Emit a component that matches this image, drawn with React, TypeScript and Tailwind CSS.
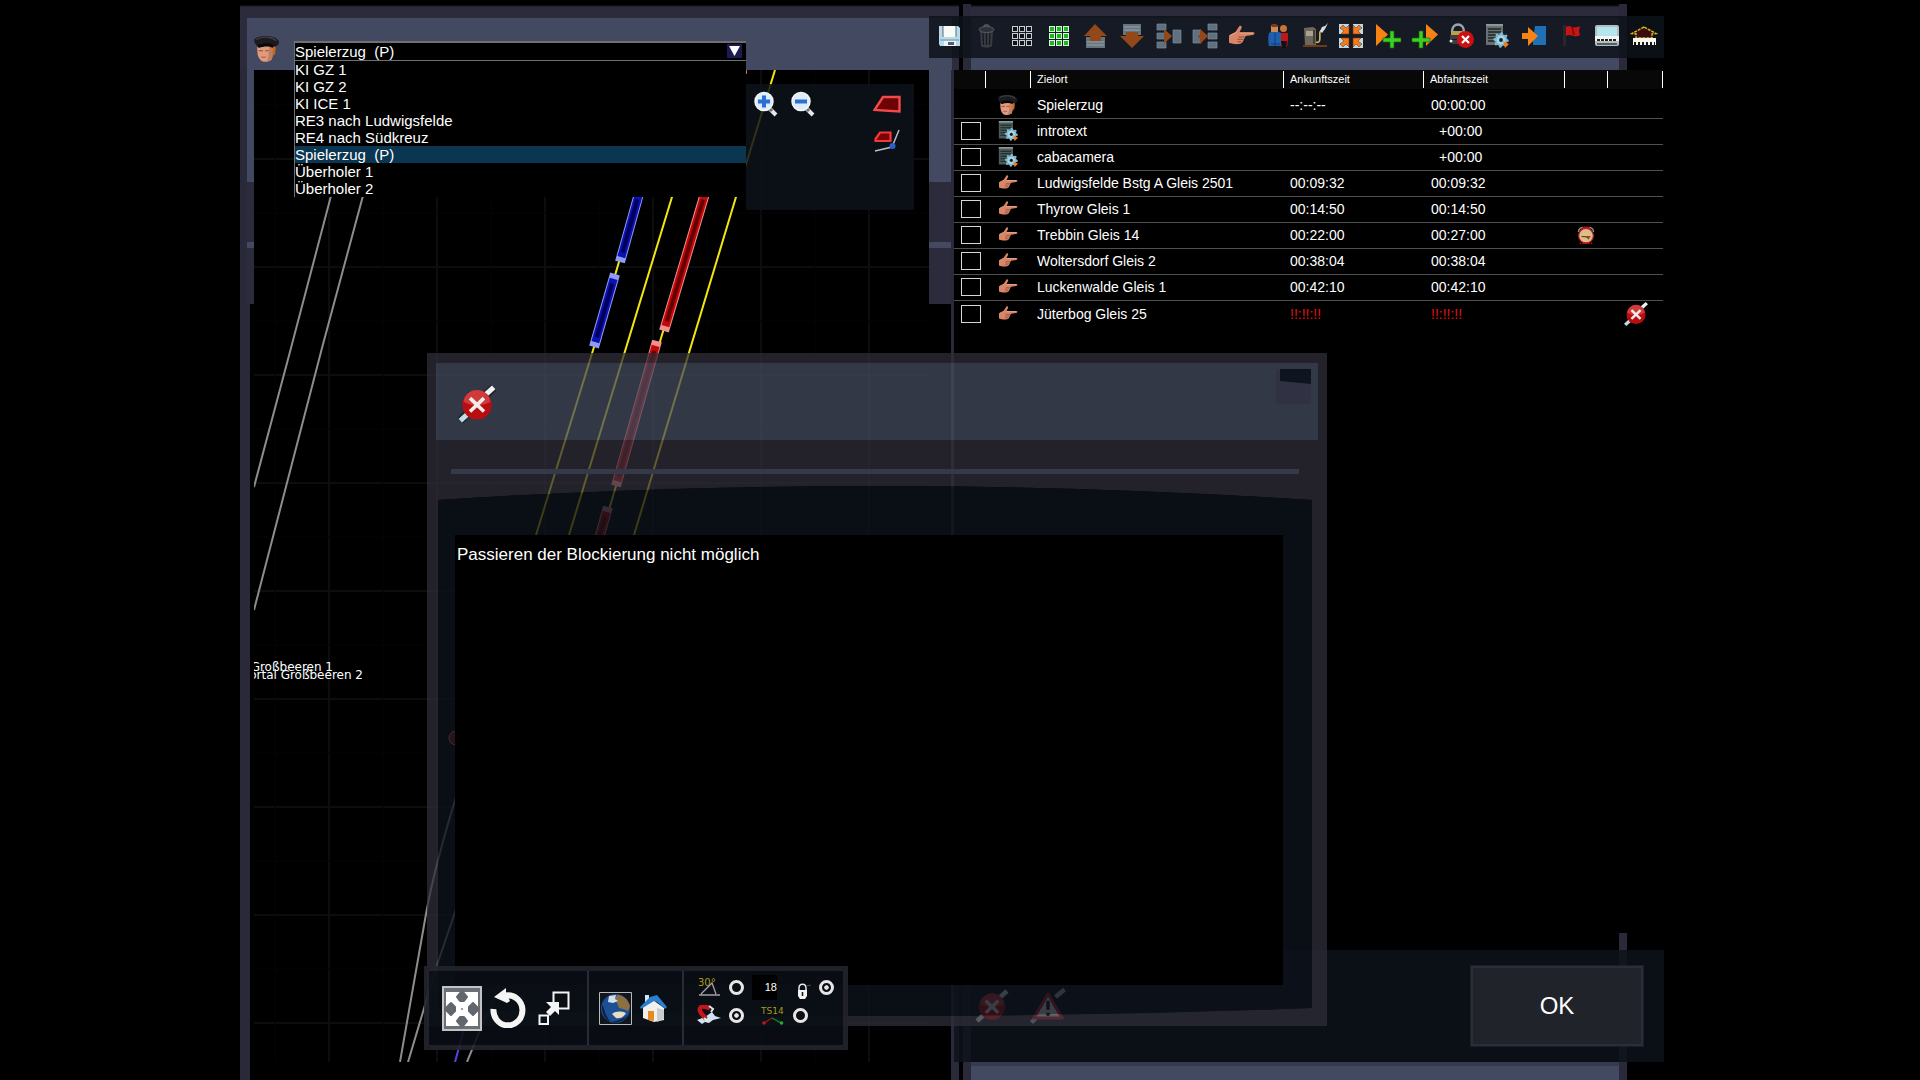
import type { ReactNode } from 'react'

const trains = [
  'KI GZ 1',
  'KI GZ 2',
  'KI ICE 1',
  'RE3 nach Ludwigsfelde',
  'RE4 nach Südkreuz',
  'Spielerzug\u00a0\u00a0(P)',
  'Überholer 1',
  'Überholer 2',
]
const selectedTrain = 'Spielerzug\u00a0\u00a0(P)'

type Stop = {
  kind: 'driver' | 'script' | 'stop'
  name: string
  arrival: string
  departure: string
  timed?: boolean
  blocked?: boolean
}

const stops: Stop[] = [
  { kind: 'driver', name: 'Spielerzug', arrival: '--:--:--', departure: '00:00:00' },
  { kind: 'script', name: 'introtext', arrival: '', departure: '+00:00' },
  { kind: 'script', name: 'cabacamera', arrival: '', departure: '+00:00' },
  { kind: 'stop', name: 'Ludwigsfelde Bstg A Gleis 2501', arrival: '00:09:32', departure: '00:09:32' },
  { kind: 'stop', name: 'Thyrow Gleis 1', arrival: '00:14:50', departure: '00:14:50' },
  { kind: 'stop', name: 'Trebbin Gleis 14', arrival: '00:22:00', departure: '00:27:00', timed: true },
  { kind: 'stop', name: 'Woltersdorf Gleis 2', arrival: '00:38:04', departure: '00:38:04' },
  { kind: 'stop', name: 'Luckenwalde Gleis 1', arrival: '00:42:10', departure: '00:42:10' },
  { kind: 'stop', name: 'Jüterbog Gleis 25', arrival: '!!:!!:!!', departure: '!!:!!:!!', blocked: true },
]

function Svg({ children, className = 'size-6' }: { children: ReactNode; className?: string }) {
  return (
    <svg viewBox="0 0 24 24" className={`shrink-0 overflow-visible ${className}`} fill="none" aria-hidden="true">
      {children}
    </svg>
  )
}

function DriverIcon({ className }: { className?: string }) {
  return (
    <Svg className={className}>
      <path d="M4 9c-1 3 0 5 0 8 1 3 2 5 5 6 3 0 5 0 7-2 1-3 2-7 2-12z" fill="#e09a7c" />
      <path d="M14 10c1 3 1 6 2 9l3-3c0-2 1-4 0-7z" fill="#c4661c" />
      <path d="M14 11c-1 4 0 8-2 11 2 0 3 0 4-1 1-4 1-7 1-10z" fill="#c27d61" />
      <path d="M5 13.500h3.500M10.500 13.500h3" stroke="#8a4b36" strokeWidth="1" />
      <path d="M7 19h4" stroke="#b0604a" strokeWidth="1" />
      <path d="M1 4c2-4 18-5 21 1 1 3-1 4-3 5-4-1-10-2-14 1-2-2-4-4-4-7z" fill="#1b1b1f" />
      <path d="M3 4c4-3 13-3 17 1" stroke="#3f3f46" strokeWidth="1.200" />
      <path d="M4 9c4-2 10-3 14 0l-1 2c-4-2-8-1-12 0z" fill="#08080a" />
    </Svg>
  )
}

function gearPath(cx: number, cy: number, r: number) {
  const pts: string[] = []
  for (let i = 0; i < 32; i++) {
    const a = (i / 32) * Math.PI * 2
    const rr = i % 4 < 2 ? r : r - 1.7
    pts.push(`${(cx + Math.cos(a) * rr).toFixed(1)},${(cy + Math.sin(a) * rr).toFixed(1)}`)
  }
  return pts.join(' ')
}

function ScriptIcon({ className, paper = '#4b5a5a' }: { className?: string; paper?: string }) {
  return (
    <Svg className={className}>
      <rect x="1" y="0" width="17" height="21" fill={paper} />
      <path d="M1 0h17v2H1z" fill="#8b9a98" />
      <path d="M3 5h13M3 8h13M3 11h13M3 14h13M3 17h13" stroke="#1c2424" strokeWidth="1.300" />
      <polygon points={gearPath(16, 16, 7.8)} fill="#7fb9cf" />
      <circle cx="16" cy="16" r="4.400" fill="#a5d5e6" />
      <circle cx="16" cy="16" r="1.900" fill="#12202a" />
      <path d="M18 17l6 3-4 4z" fill="#f27d1c" />
    </Svg>
  )
}

function HandIcon({ className }: { className?: string }) {
  return (
    <Svg className={className}>
      <path
        d="M0 11c2-1 4-2 6-3l4-6c1-1 3 0 2 2l-2 4 13 0c2 0 2 2 0 2.500l-7 1-1 2-1 2-1 2-2 1.500c-4 1-8 0-11-1z"
        fill="#d98668"
      />
      <path d="M10 8.700h13M1 11c2-1 4-2 6-3" stroke="#f0ae92" strokeWidth="0.800" />
      <path d="M9 12.500h6M8 14.700h6M8 17h4" stroke="#8f4a35" strokeWidth="0.900" />
    </Svg>
  )
}

function BlockIcon({ className }: { className?: string }) {
  return (
    <Svg className={className}>
      <path d="M2 22L22 2" stroke="#15181f" strokeOpacity=".6" strokeWidth="5" />
      <path d="M2 22L7 17.500" stroke="#c5dbe4" strokeWidth="3" />
      <path d="M17 6.500L22 2" stroke="#eef2f2" strokeWidth="3" />
      <circle cx="12" cy="12.500" r="8.800" fill="#b90d12" />
      <path d="M3.900 10.500a8.200 8.200 0 0 1 16.200 0c-4 3-12 3-16.200 0z" fill="#cf3a3a" />
      <path d="M7.800 8.500l8.400 8M16.200 8.500l-8.400 8" stroke="#f4ece8" strokeWidth="2.200" />
    </Svg>
  )
}

function WarningIcon({ className }: { className?: string }) {
  return (
    <Svg className={className}>
      <path d="M1 23L6 18M17 6L23 1" stroke="#b4bcc4" strokeWidth="3" />
      <path d="M12 4L2.500 20h19z" fill="#e8e8e8" stroke="#c02020" strokeWidth="2" strokeLinejoin="round" />
      <path d="M12 8.500v6M12 16.500v2.200" stroke="#101010" strokeWidth="2.200" />
    </Svg>
  )
}

function ClockIcon({ className }: { className?: string }) {
  return (
    <Svg className={className}>
      <path d="M2 8c0-4 3-6 6-6M22 8c0-4-3-6-6-6" stroke="#8d8d8d" strokeWidth="2" />
      <path d="M7 2c3-2 7-2 10 0l3 4H4z" fill="#b3121c" />
      <circle cx="12" cy="13" r="9.800" fill="#e0bd84" stroke="#b3202a" strokeWidth="1.500" />
      <path d="M6 14l7 .5 3 3M13 14.500h5" stroke="#5a3424" strokeWidth="1.500" />
      <path d="M5 22l-1 2M19 22l1 2M7 23h10" stroke="#b3121c" strokeWidth="2" />
    </Svg>
  )
}

function DotGrid({ stroke, fill }: { stroke: string; fill: string }) {
  return (
    <Svg>
      {[3, 10, 17].map((y) =>
        [3, 10, 17].map((x) => (
          <rect key={`${x}-${y}`} x={x - 0.5} y={y - 0.5} width="5" height="5" fill={fill} stroke={stroke} />
        )),
      )}
    </Svg>
  )
}

const plus = 'h4v7h7v4h-7v6h-4v-6h-7v-4h7z'

const tools: { label: string; icon: ReactNode }[] = [
  {
    label: 'Speichern',
    icon: (
      <Svg>
        <path d="M2 2h19l2 2v18H3l-1-2z" fill="#b9d9ea" />
        <path d="M6 2h13v11H6z" fill="#f7faf5" />
        <path d="M3 15h19v2H3z" fill="#8fb6cd" />
        <path d="M7 17h12v5H7z" fill="#eef4f4" />
        <path d="M11 18h6v3h-6z" fill="#555e66" />
        <path d="M6 2v11M19 2v11" stroke="#3d4a54" strokeWidth=".8" />
      </Svg>
    ),
  },
  {
    label: 'Löschen',
    icon: (
      <Svg>
        <path d="M6 6h13l-1 16c-3 2-8 2-11 0z" fill="#393c43" />
        <path d="M9 9l.5 12M12.500 9v12M16 9l-.5 12" stroke="#15181e" strokeWidth="1.300" />
        <ellipse cx="12.500" cy="5.500" rx="7.500" ry="3" fill="#2d3036" stroke="#565a61" />
        <path d="M9.500 3c1-3 5-3 6 0" stroke="#565a61" strokeWidth="1.500" />
      </Svg>
    ),
  },
  { label: 'Raster', icon: <DotGrid stroke="#c9cdd0" fill="#11151b" /> },
  { label: 'Raster aktiv', icon: <DotGrid stroke="#d8f5d8" fill="#17b91d" /> },
  {
    label: 'Nach oben',
    icon: (
      <Svg>
        <path d="M3 13h19v11H3z" fill="#66737e" />
        <path d="M4 18h17M4 21h17" stroke="#99a5ac" />
        <path d="M12 0L24 12h-6v5H7v-5H1z" fill="#93481a" />
      </Svg>
    ),
  },
  {
    label: 'Nach unten',
    icon: (
      <Svg>
        <path d="M3 0h18v11H3z" fill="#66737e" />
        <path d="M4 3h16M4 6h16" stroke="#99a5ac" />
        <path d="M12 24L0 12h6V8h12v4h6z" fill="#93481a" />
      </Svg>
    ),
  },
  {
    label: 'Trennen',
    icon: (
      <Svg>
        <path d="M0 0h9v6H0zM0 9h9v6H0zM0 18h9v6H0zM16 6h8v13h-8z" fill="#5f7180" stroke="#7b8c98" strokeWidth=".7" />
        <path d="M7 11V5l8 7-8 8v-6z" fill="#93481a" />
      </Svg>
    ),
  },
  {
    label: 'Verbinden',
    icon: (
      <Svg>
        <path d="M15 0h9v6h-9zM15 9h9v6h-9zM15 18h9v6h-9zM0 6h8v13H0z" fill="#5f7180" stroke="#7b8c98" strokeWidth=".7" />
        <path d="M5 14v-3h2V5l8 7-8 8v-6z" fill="#93481a" />
      </Svg>
    ),
  },
  {
    label: 'Ziel',
    icon: <HandIcon className="size-[25px]" />,
  },
  {
    label: 'Fahrgäste',
    icon: (
      <Svg>
        <path d="M14 9h8v7l-1 7h-6z" fill="#c01519" />
        <path d="M15 17h6l-1 7h-4z" fill="#111" />
        <circle cx="17.500" cy="4.500" r="3.500" fill="#c4763c" />
        <path d="M3 9c3-2 9-2 12 0v13H3c-1-4-1-9 0-13z" fill="#1f5fae" />
        <path d="M9 9v13M5 20h9" stroke="#123d78" />
        <path d="M5 2c2-3 7-2 7 1v5H5z" fill="#c98a5a" />
        <path d="M5 1c2-2 6-1 7 1l-1 1H6z" fill="#7a3b12" />
      </Svg>
    ),
  },
  {
    label: 'Tanken',
    icon: (
      <Svg>
        <path d="M1 4l9-1 3 2v16H2z" fill="#6e675d" />
        <path d="M3 7h7v5H3z" fill="#aaa28f" />
        <path d="M11 6v14" stroke="#35302a" strokeWidth="1.500" />
        <path d="M0 21h24v2H0z" fill="#6c3a15" />
        <path d="M13 18c6 2 3-7 4-10l3-3" stroke="#c9b15b" strokeWidth="1.700" />
        <path d="M17 7l2-4 3-1 3-3-3 6-3 4z" fill="#d9dde0" />
      </Svg>
    ),
  },
  {
    label: 'Kuppeln',
    icon: (
      <Svg>
        <path d="M0 0h10v10H0zM14 0h10v10H14zM0 14h10v10H0zM14 14h10v10H14z" fill="#b9dbe6" />
        <path
          d="M1 4l3-3 3 3 3-3v9H2l3-3zM23 4l-3-3-3 3-3-3v9h8l-3-3zM1 20l3 3 3-3 3 3v-9H2l3 3zM23 20l-3 3-3-3-3 3v-9h8l-3 3z"
          fill="#f07b22"
          stroke="#83380b"
          strokeWidth=".6"
        />
      </Svg>
    ),
  },
  {
    label: 'Davor einfügen',
    icon: (
      <Svg>
        <path d="M0 0l12 10.500L0 22z" fill="#f98215" />
        <path d={`M14 7${plus}`} fill="#3ccf22" stroke="#13690b" strokeWidth=".7" />
      </Svg>
    ),
  },
  {
    label: 'Danach einfügen',
    icon: (
      <Svg>
        <path d="M14 0l12 10.500L14 22z" fill="#f98215" />
        <path d={`M7 7${plus}`} fill="#3ccf22" stroke="#13690b" strokeWidth=".7" />
      </Svg>
    ),
  },
  {
    label: 'Sperre aufheben',
    icon: (
      <Svg>
        <path d="M3 8c0-10 12-10 12 0" stroke="#9aa6ad" strokeWidth="2.500" />
        <path d="M2 7h14v4H2z" fill="#b9a04c" />
        <path d="M1 11h12v4H1zM3 16h8v4H3z" fill="#3b3d40" />
        <circle cx="2" cy="17" r="1.500" fill="#e9eef0" />
        <circle cx="16.500" cy="15.500" r="8.500" fill="#cb1014" />
        <path d="M13 12l7 7M20 12l-7 7" stroke="#fff" strokeWidth="2.200" />
      </Svg>
    ),
  },
  { label: 'Skript', icon: <ScriptIcon className="size-6" paper="#6a7070" /> },
  {
    label: 'Portal',
    icon: (
      <Svg>
        <path d="M13 2h11v19H11v-4z" fill="#1f70b4" />
        <path d="M0 9h6V3l10 9-10 10v-7H0z" fill="#f98215" />
      </Svg>
    ),
  },
  {
    label: 'Flagge',
    icon: (
      <Svg>
        <path d="M4 1h3v21H4z" fill="#2e2426" />
        <path d="M7 3c4-3 6 3 14-1l-1 5 1 4c-6 4-9-2-14 1z" fill="#c81414" />
        <path d="M13 3l2 8" stroke="#7d0909" strokeWidth="1.500" />
      </Svg>
    ),
  },
  {
    label: 'Anzeige',
    icon: (
      <Svg>
        <rect x="0" y="1" width="24" height="21" rx="2" fill="#b7bcbc" />
        <path d="M2 3h20v9H2z" fill="#b4e6f0" />
        <path d="M0 12h24v5H0z" fill="#f3f5f4" />
        <path d="M2 16h20" stroke="#222" strokeWidth="2" strokeDasharray="3 1" />
        <path d="M2 19h20v2H2z" fill="#4c6266" />
      </Svg>
    ),
  },
  {
    label: 'Bahnhof',
    icon: (
      <Svg>
        <path d="M12 3L0 9.500l4 .5v4h16v-4l4-.5z" fill="#3a0d10" stroke="#d9b321" strokeWidth="1.500" strokeDasharray="3 1" />
        <path d="M1 14h23v7H1z" fill="#f5f5ee" />
        <path d="M2 19.500h21" stroke="#151515" strokeWidth="3" strokeDasharray="2 2" />
      </Svg>
    ),
  },
]

function Consist({ x1, y1, x2, y2, tone }: { x1: number; y1: number; x2: number; y2: number; tone: 'red' | 'blue' }) {
  const c = tone === 'red' ? ['#f09090', '#c40808', '#660000'] : ['#8f9cf5', '#0a12b4', '#00005c']
  // ends of the inner body are pulled in so that the couplers stay light
  const len = Math.hypot(x2 - x1, y2 - y1)
  const dx = ((x2 - x1) / len) * 5
  const dy = ((y2 - y1) / len) * 5
  return (
    <g>
      <path d={`M${x1} ${y1}L${x2} ${y2}`} stroke={c[0]} strokeWidth="10" />
      <path d={`M${x1 + dx} ${y1 + dy}L${x2 - dx} ${y2 - dy}`} stroke={c[1]} strokeWidth="8" />
      <path d={`M${x1 + dx * 2} ${y1 + dy * 2}L${x2 - dx * 2} ${y2 - dy * 2}`} stroke={c[2]} strokeWidth="4" />
    </g>
  )
}

function TrackMap() {
  const xs = [329, 437, 545, 653, 761, 869]
  const ys = [159, 267, 375, 483, 591, 699, 807, 915, 1023]
  return (
    <svg viewBox="254 70 675 992" preserveAspectRatio="xMinYMin slice" className="absolute inset-0 size-full" fill="none">
      <g stroke="#0d0d0d" strokeWidth="2">
        {xs.map((x) => (
          <path key={x} d={`M${x} 70V1062`} />
        ))}
        {ys.map((y) => (
          <path key={y} d={`M254 ${y}H929`} />
        ))}
      </g>
      <g stroke="#050505">
        {xs.map((x) => (
          <path key={x} d={`M${x - 54} 70V1062`} />
        ))}
        {ys.map((y) => (
          <path key={y} d={`M254 ${y - 54}H929`} />
        ))}
      </g>
      <g stroke="#8d8d8d" strokeWidth="2">
        <path d="M332 192L291 348 254 487" />
        <path d="M364 192L322 348 254 610" />
        <path d="M460 784C445 832 432 880 426 914S408 1016 400 1062" />
        <path d="M470 868L437 965 408 1062" />
        <path d="M500 984L480 1030 467 1062" />
      </g>
      <path d="M472 1000L455 1062" stroke="#5347e0" strokeWidth="2" />
      <g stroke="#f5e50f" strokeWidth="2">
        <path d="M638 197L594 347 536 535" />
        <path d="M704 197L616 486 600 540" />
        <path d="M711 70L672 197 569 535" />
        <path d="M775 70L736 197 634 535" />
      </g>
      <path d="M746 70v4" stroke="#d06a6a" strokeWidth="2" />
      <Consist x1={640} y1={190} x2={620} y2={262} tone="blue" />
      <Consist x1={615} y1={274} x2={594} y2={347} tone="blue" />
      <Consist x1={706} y1={190} x2={664} y2={331} tone="red" />
      <Consist x1={657} y1={341} x2={616} y2={486} tone="red" />
      <Consist x1={608} y1={507} x2={590} y2={570} tone="red" />
      <circle cx="456" cy="738" r="7" fill="#9a1515" stroke="#d0b0b0" />
      <g fill="#fff" fontFamily="'DejaVu Sans', sans-serif" fontSize="12" textAnchor="end">
        <text x="333" y="671">
          Großbeeren 1
        </text>
        <text x="363" y="679">
          Portal Großbeeren 2
        </text>
      </g>
    </svg>
  )
}

function Magnifier({ minus }: { minus?: boolean }) {
  return (
    <Svg>
      <path d="M15 16l7 7" stroke="#e6e6e6" strokeWidth="4" />
      <path d="M15 16l3 3" stroke="#6b6b6b" strokeWidth="3" />
      <circle cx="10" cy="9.500" r="9" fill="#dcecf8" stroke="#f3f6f8" strokeWidth="1.500" />
      <path d="M4 9.500h12" stroke="#2a6fd6" strokeWidth="4" />
      {!minus && <path d="M10 3.500v12" stroke="#2a6fd6" strokeWidth="4" />}
    </Svg>
  )
}

// gutter beside the map, with the bevels of the window skin
function Gutter({ children }: { children: ReactNode }) {
  return (
    <div className="flex flex-1 flex-col">
      <div className="h-28 bg-[#434960]" />
      <div className="h-[60px] bg-[#2b2b3b]" />
      <div className="h-[6px] bg-[#434960]" />
      <div className="h-14 bg-[#2b2b3b]" />
      <div className="flex flex-1">{children}</div>
    </div>
  )
}

function MapWindow() {
  return (
    <section className="flex w-1/2 flex-col">
      <div className="mr-px flex h-[70px] shrink-0 bg-linear-to-b from-black from-5% to-[#2b2b3b] to-10% px-[7px] pt-[18px]">
        <div className="flex flex-1 items-start bg-[#434960] pl-[6px]">
          <DriverIcon className="mt-[17px] size-7" />
          <div className="relative ml-[13px] mt-[23px] w-[452px]">
            <label htmlFor="train" className="sr-only">
              Zug
            </label>
            <select
              id="train"
              defaultValue={selectedTrain}
              className="block h-[21px] w-full appearance-none border-y-2 border-l border-[#707070] bg-black text-[15px] leading-[17px] text-white outline-none"
            >
              {trains.map((name) => (
                <option key={name}>{name}</option>
              ))}
            </select>
            <svg viewBox="0 0 15 14" className="pointer-events-none absolute right-1 top-[3px] h-[14px] w-[15px]">
              <path d="M0 0h15v14H0z" fill="#1b1b52" />
              <path d="M2 2h11l-5.500 10z" fill="#fff" />
            </svg>
            <ul role="listbox" aria-label="Züge" className="absolute inset-x-0 top-5 z-20 border-l border-[#707070] bg-black">
              {trains.map((name) => (
                <li
                  key={name}
                  role="option"
                  aria-selected={name === selectedTrain}
                  className="h-[17px] text-[15px] leading-[17px] text-white aria-selected:bg-[#0a3652]"
                >
                  {name}
                </li>
              ))}
            </ul>
          </div>
        </div>
      </div>

      <div className="flex min-h-0 flex-1">
        <div className="flex w-[14px] bg-[#292939]">
          <div className="w-[7px]" />
          <Gutter>
            <div className="ml-[3px] flex-1 bg-black" />
          </Gutter>
        </div>
        <div className="relative mb-[18px] flex-1 overflow-hidden bg-black">
          <TrackMap />
          <div className="absolute right-[15px] top-[14px] flex h-[126px] w-[168px] justify-between bg-[#0d121a]/85 px-2 pt-2">
            <div className="flex items-start gap-[13px]">
              <button aria-label="Vergrößern">
                <Magnifier />
              </button>
              <button aria-label="Verkleinern">
                <Magnifier minus />
              </button>
            </div>
            <div className="mr-[5px] flex flex-col items-end gap-[14px]">
              <button aria-label="Zug anzeigen">
                <svg viewBox="0 0 28 20" className="mt-[3px] h-5 w-7">
                  <path d="M1.500 15L10 2h16.500v14.500L1.500 15z" fill="#6e0305" stroke="#f04a4a" strokeWidth="2.400" />
                </svg>
              </button>
              <button aria-label="Zug auf Gleis">
                <svg viewBox="0 0 28 24" className="h-6 w-7">
                  <path d="M2.500 10L7 3.500h10.500V12h-15z" fill="#7e0305" stroke="#f03a3a" strokeWidth="2.200" />
                  <path d="M2 22l17-4 7-17" stroke="#b9bcc2" strokeWidth="1.500" fill="none" />
                  <circle cx="19.500" cy="17" r="3" fill="#2a62c8" />
                </svg>
              </button>
            </div>
          </div>
        </div>
        <div className="flex w-[31px]">
          <Gutter>
            <div className="w-[22px] bg-black" />
          </Gutter>
          <div className="mr-px w-[8px] bg-[#292939]" />
        </div>
      </div>
    </section>
  )
}

function StopIcon({ kind }: { kind: Stop['kind'] }) {
  if (kind === 'driver') return <DriverIcon className="mx-auto size-[22px]" />
  if (kind === 'script') return <ScriptIcon className="mx-auto size-5" />
  return <HandIcon className="mx-auto size-[18px]" />
}

function Timetable() {
  const th = 'border-l border-white pl-[6px] text-left text-[11px] font-normal leading-[17px]'
  return (
    <table className="w-full table-fixed border-collapse">
      <colgroup>
        <col className="w-[31px]" />
        <col className="w-[45px]" />
        <col />
        <col className="w-[140px]" />
        <col className="w-[141px]" />
        <col className="w-[43px]" />
        <col className="w-[56px]" />
      </colgroup>
      <thead className="bg-[#080808]">
        <tr className="*:h-[19px] *:p-0">
          <th aria-label="Auswahl" />
          <th>
            <div className={`${th} h-[17px]`} />
          </th>
          <th>
            <div className={th}>Zielort</div>
          </th>
          <th>
            <div className={th}>Ankunftszeit</div>
          </th>
          <th>
            <div className={th}>Abfahrtszeit</div>
          </th>
          <th>
            <div className={`${th} h-[17px]`} />
          </th>
          <th>
            <div className={`${th} h-[17px] border-r`} />
          </th>
        </tr>
      </thead>
      <tbody>
        {stops.map((stop) => (
          <tr
            key={stop.name}
            className="h-[26px] border-b border-[#505050] text-[14px] leading-5 text-white *:p-0 first:h-[29px] first:*:pt-[3px] last:border-0"
          >
            <td>
              {stop.kind !== 'driver' && (
                <input
                  type="checkbox"
                  aria-label={stop.name}
                  className="ml-[7px] block h-[18px] w-5 appearance-none border border-[#d6d6d6] checked:bg-white"
                />
              )}
            </td>
            <td>
              <StopIcon kind={stop.kind} />
            </td>
            <td className="whitespace-nowrap">
              <span className="pl-[7px]">{stop.name}</span>
            </td>
            <td className={stop.blocked ? 'text-[#e01212]' : ''}>
              <span className="pl-[7px]">{stop.arrival}</span>
            </td>
            <td className={stop.blocked ? 'text-[#e01212]' : ''}>
              <span className={stop.kind === 'script' ? 'pl-4' : 'pl-2'}>{stop.departure}</span>
            </td>
            <td>{stop.timed && <ClockIcon className="mx-auto size-[18px]" />}</td>
            <td>{stop.blocked && <BlockIcon className="ml-4 size-[26px]" />}</td>
          </tr>
        ))}
      </tbody>
    </table>
  )
}

function TimetableWindow() {
  return (
    <section className="relative flex w-1/2 flex-col">
      <div className="absolute inset-y-0 left-[3px] right-[53px] flex flex-col border-x-8 border-[#292939]">
        <div className="h-[18px] bg-linear-to-b from-black from-20% to-[#2b2b3b] to-40%" />
        <div className="h-[52px] bg-[#434960]" />
        <div className="flex-1 bg-black" />
        <div className="h-[18px] border-t-4 border-[#373b50] bg-[#434960]" />
      </div>
      <div className="absolute inset-x-0 top-0 h-1 bg-black" />

      <div className="relative -ml-[31px] mr-4 mt-4 flex h-[42px] items-center bg-[#0d121a]/85 px-[2px] pb-[2px]">
        {tools.map((tool) => (
          <button key={tool.label} aria-label={tool.label} className="flex flex-1 justify-center">
            {tool.icon}
          </button>
        ))}
      </div>

      <div className="relative -ml-[6px] mr-4 mt-3 flex-1 bg-black pr-px text-white">
        <Timetable />
      </div>

      <div className="relative -ml-[6px] mb-[18px] mr-4 mt-[17px] flex h-28 items-center justify-between bg-[#0d121a]/85 pl-5 pr-[21px]">
        <div className="flex gap-5">
          <BlockIcon className="size-9" />
          <WarningIcon className="size-9" />
        </div>
        <button className="h-20 w-[172px] border-2 border-[#2b2d3a] bg-[#20232a] text-[24px] text-white outline outline-[#1b1e29]">
          OK
        </button>
      </div>
    </section>
  )
}

function MessageDialog() {
  return (
    <section role="dialog" aria-label="Meldung" className="absolute bottom-[54px] left-[427px] top-[353px] flex w-[900px] flex-col">
      <div className="h-[10px] bg-[#2f2d39]/75" />
      <div className="flex h-[77px] border-x-9 border-[#2f2d39]/75 bg-[#444b5d]/75 bg-clip-padding">
        <BlockIcon className="ml-[21px] mt-[21px] size-10" />
        <button aria-label="Schließen" className="ml-auto mr-[7px] mt-[6px] h-[35px] w-[35px] bg-[#303243] pl-1">
          <svg viewBox="0 0 31 35" className="h-[35px] w-[31px]">
            <path d="M0 0h31v15L0 12z" fill="#0f1520" />
          </svg>
        </button>
      </div>
      <div className="h-[46px] bg-[#2f2d39]/75 pl-6 pr-7 pt-[29px]">
        <div className="h-[5px] bg-[#353a4a]" />
      </div>
      <div className="flex min-h-0 flex-1">
        <div className="w-[11px] bg-[#2f2d39]/75" />
        <div className="flex flex-1 flex-col">
          <svg viewBox="0 0 874 14" preserveAspectRatio="none" className="block h-[14px] w-full">
            <path d="M0 0H874V14Q437-14 0 14z" fill="#2f2d39" fillOpacity=".75" />
            <path d="M0 14Q437-14 874 14z" fill="#0d121a" fillOpacity=".8" />
          </svg>
          <div className="flex-1 bg-[#0d121a]/80 pl-[17px] pr-[29px] pt-[35px]">
            <div className="h-[calc(100%-23px)] bg-black pl-[2px] pt-[10px] text-[17px] leading-5 text-white">
              Passieren der Blockierung nicht möglich
            </div>
          </div>
          <svg viewBox="0 0 874 8" preserveAspectRatio="none" className="block h-2 w-full">
            <path d="M0 0Q437 16 874 0V8H0z" fill="#2f2d39" fillOpacity=".75" />
            <path d="M0 0Q437 16 874 0z" fill="#0d121a" fillOpacity=".8" />
          </svg>
        </div>
        <div className="w-[15px] bg-[#2f2d39]/75" />
      </div>
      <div className="h-[10px] bg-[#2f2d39]/75" />
    </section>
  )
}

function Option({ label, checked }: { label: string; checked?: boolean }) {
  return (
    <input
      type="radio"
      name={label}
      aria-label={label}
      defaultChecked={checked}
      className="size-[15px] shrink-0 appearance-none rounded-full border-3 border-[#e6e6e6] bg-[#0b0e14] checked:bg-[radial-gradient(circle,#e6e6e6_30%,#0b0e14_40%)]"
    />
  )
}

function EditToolbar() {
  return (
    <div className="absolute bottom-[30px] left-[424px] flex h-[84px] border-5 border-[#23232e]/90 bg-[#0a0e15]/90 bg-clip-padding">
      <div className="flex w-[158px] items-center pl-[13px]">
        <button aria-label="Verschieben">
          <svg viewBox="0 0 40 45" className="h-[45px] w-10">
            <path d="M1 1h38v43H1z" fill="#6b6f76" stroke="#c2c4c6" strokeWidth="2" />
            <path d="M4 6h32v34H4z" fill="#fff" />
            <path
              d="M20 5l5 6-3 4h-4l-3-4zM20 41l5-6-3-4h-4l-3 4zM3 23l6-6 4 4v4l-4 4zM37 23l-6-6-4 4v4l4 4z"
              fill="#62666d"
              stroke="#62666d"
              strokeWidth="2"
              strokeLinejoin="round"
            />
            <path d="M19 22h2v2h-2z" fill="#9a9da2" />
          </svg>
        </button>
        <button aria-label="Drehen" className="ml-2">
          <svg viewBox="0 0 36 40" className="h-10 w-9">
            <path d="M3.500 21A14.500 15 0 1 0 16 7.500" stroke="#f5f5f5" strokeWidth="6" fill="none" />
            <path d="M4 9L16 0v4l4 9-3 2z" fill="#f5f5f5" />
          </svg>
        </button>
        <button aria-label="Skalieren" className="ml-3">
          <svg viewBox="0 0 32 34" className="h-[34px] w-8" fill="none" stroke="#f5f5f5" strokeWidth="2">
            <path d="M15.500 1.500h15v16h-15z" />
            <path d="M1.500 24.500h8.500v8.500H1.500z" />
            <path d="M8 11h13v13l-4-4-5 5-4-4 5-5z" fill="#f5f5f5" stroke="none" />
          </svg>
        </button>
      </div>
      <div className="w-[2px] bg-[#2b2b38]" />
      <div className="flex w-[93px] items-center gap-2 pl-[10px]">
        <button aria-label="Welt">
          <svg viewBox="0 0 33 33" className="size-[33px]">
            <path d="M.5.500h32v32H.5z" fill="#12161d" stroke="#b9b9b9" />
            <circle cx="16.500" cy="16.500" r="14.500" fill="#1d4f95" />
            <path d="M18 3c6 0 11 4 13 11l-2 5-5-2-4-1-2-5-2-4z" fill="#8d6f42" />
            <path d="M10 4l7-1-1 4 3 2-5 2-5-1z" fill="#cfe0ec" />
            <path d="M13 22c4-3 9-3 14-1-2 4-6 6-10 5z" fill="#e9dfc0" />
            <path d="M3 12c3 6 3 12 9 18-6-2-10-9-9-18z" fill="#0c2347" />
            <path d="M12 30c6 2 13-1 17-7-3 3-10 6-17 7z" fill="#0c2347" />
          </svg>
        </button>
        <button aria-label="Startansicht">
          <svg viewBox="0 0 27 28" className="h-7 w-[27px]">
            <path d="M3 13L13 6l11 8v12l-10 2L3 24z" fill="#f0f0ee" />
            <path d="M17 14l7 2v9l-7 3z" fill="#c9ccd0" />
            <path d="M8 17h6v10l-6-1z" fill="#e88a1d" />
            <path d="M5 1h4v7H5z" fill="#d8e4ee" />
            <path d="M0 13L10 3l7-2 10 12-2 2-8-7-3-1-13 8z" fill="#2a7fd0" />
          </svg>
        </button>
      </div>
      <div className="w-[2px] bg-[#2b2b38]" />
      <div className="w-[159px] pl-[13px] pt-[2px]">
        <div className="flex h-7 items-center">
          <svg viewBox="0 0 24 20" className="h-5 w-6" fill="none">
            <path d="M2 18h21M4 17L15 6l4 11" stroke="#a3a3a3" strokeWidth="1.300" />
            <text x="1" y="9" fontSize="10" fontFamily="'DejaVu Sans', sans-serif" fill="#a79a18">
              30°
            </text>
          </svg>
          <div className="ml-2 flex items-center gap-2">
            <Option label="Winkelraster" />
            <input
              aria-label="Winkel"
              defaultValue="18"
              className="h-[25px] w-[25px] bg-black text-right text-[11px] text-white outline-none"
            />
          </div>
          <svg viewBox="0 0 14 28" className="ml-5 h-7 w-[14px]" fill="none">
            <path d="M2 18v-3c0-5 7-5 7 0v3" stroke="#e8e8e8" strokeWidth="1.500" />
            <path d="M1 17h9v6l-2 3H3l-2-3z" fill="#f3f3f3" />
            <path d="M5.500 19v4" stroke="#111" strokeWidth="1.500" />
            <path d="M9 13l5-1" stroke="#4c4c4c" />
          </svg>
          <div className="ml-2 flex">
            <Option label="Sperre" checked />
          </div>
        </div>
        <div className="flex h-7 items-center gap-2">
          <svg viewBox="0 0 24 20" className="h-5 w-6" fill="none">
            <path d="M0 15l8-3 7-5 3 4 6 2-8 2-4 3-4-1-3 2z" fill="#cfe4ee" />
            <path d="M13 3L9 2C4 0 1 4 4 8l5 6" stroke="#c3161a" strokeWidth="4.500" />
            <path d="M12 1l4 3-2 3M7 13l3 3 2-3" stroke="#dfe8ec" strokeWidth="2" />
          </svg>
          <Option label="Einrasten" checked />
          <svg viewBox="0 0 24 20" className="ml-[9px] h-5 w-6" fill="none">
            <text x="0" y="9" fontSize="9" fontFamily="'DejaVu Sans', sans-serif" fill="#a79a18">
              TS14
            </text>
            <path d="M3 18l8-5" stroke="#a31515" strokeWidth="1.300" />
            <path d="M11 13l9 5" stroke="#178f22" strokeWidth="1.300" />
            <circle cx="3" cy="18" r="1.800" fill="#c01818" />
            <circle cx="20.500" cy="18" r="1.800" fill="#1bb32a" />
          </svg>
          <Option label="TS14" />
        </div>
      </div>
    </div>
  )
}

export default function App() {
  return (
    <main className="relative flex h-screen overflow-hidden bg-black px-[12.5%] font-['Liberation_Sans',Arial,sans-serif]">
      <MapWindow />
      <TimetableWindow />
      <MessageDialog />
      <EditToolbar />
    </main>
  )
}
